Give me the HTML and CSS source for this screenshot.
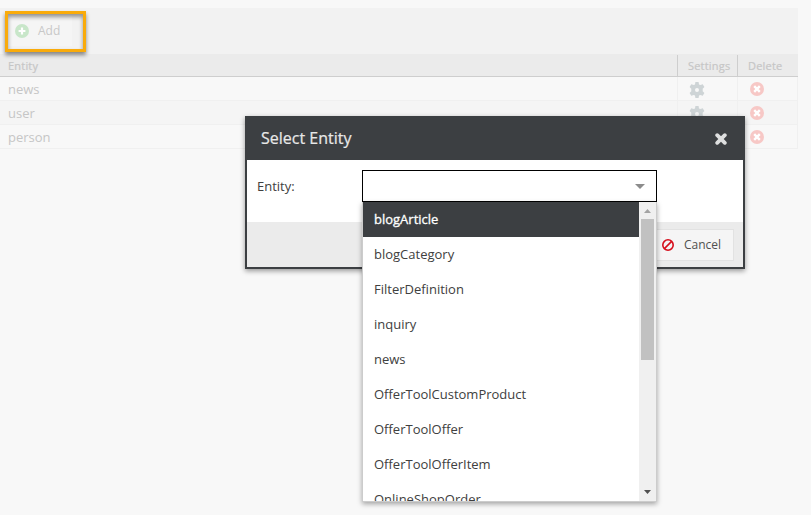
FILE: index.html
```
<!DOCTYPE html>
<html lang="en">
<head>
<meta charset="utf-8">
<title>Select Entity</title>
<link rel="stylesheet" href="styles.css">
</head>
<body>
<svg class="defs" width="0" height="0">
  <symbol id="gear" viewBox="0 0 16 16"><path fill-rule="evenodd" d="M6.4 0h3.2l.4 2.400 1.300.7 2.400-.9 1.700 2.900-1.700 1.600v2.600l1.700 1.600-1.700 2.900-2.400-.9-1.300.7-.4 2.400H6.400L6 13.600l-1.300-.7-2.400.9-1.700-2.900 1.700-1.600V6.700L.6 5.100l1.700-2.900 2.400.9L6 2.400zM8 6a2 2 0 1 0 0 4 2 2 0 0 0 0-4z"/></symbol>
  <symbol id="remove" viewBox="0 0 14 14"><circle cx="7" cy="7" r="7"/><path d="M4.200 4.200l5.600 5.600m0-5.600l-5.600 5.600" stroke="#fff" stroke-width="2.400"/></symbol>
</svg>
<main class="panel">
  <div class="toolbar">
    <button class="add"><svg width="14" height="14" viewBox="0 0 14 14"><circle cx="7" cy="7" r="7" fill="#c8e6c9"/><path d="M7 3.600v6.800M3.600 7h6.800" stroke="#fff" stroke-width="2.200"/></svg><span>Add</span></button>
    <div class="highlight"></div>
  </div>
  <div class="row head"><div>Entity</div><div>Settings</div><div>Delete</div></div>
  <div class="row"><div>news</div><div><svg class="gear"><use href="#gear"/></svg></div><div><svg class="remove"><use href="#remove"/></svg></div></div>
  <div class="row alt"><div>user</div><div><svg class="gear"><use href="#gear"/></svg></div><div><svg class="remove"><use href="#remove"/></svg></div></div>
  <div class="row"><div>person</div><div><svg class="gear"><use href="#gear"/></svg></div><div><svg class="remove"><use href="#remove"/></svg></div></div>
</main>
<section class="dialog">
  <header><h1>Select Entity</h1><svg width="12" height="12" viewBox="0 0 12 12"><path d="M2.200 2.200l7.600 7.600m0-7.600l-7.600 7.600" stroke="#dedfdf" stroke-width="3.800" stroke-linecap="round"/></svg></header>
  <div class="form">
    <label>Entity:</label>
    <div class="combo"><svg width="10" height="5" viewBox="0 0 10 5"><path d="M0 0h10L5 5z" fill="#8c8c8c"/></svg></div>
  </div>
  <footer><button class="cancel"><svg width="12" height="12" viewBox="0 0 12 12"><circle cx="6" cy="6" r="5.200"/><path d="M2.400 9.600l7.200-7.200"/></svg><span>Cancel</span></button></footer>
  <div class="menu">
    <ul>
      <li class="selected">blogArticle</li><li>blogCategory</li><li>FilterDefinition</li><li>inquiry</li><li>news</li><li>OfferToolCustomProduct</li><li>OfferToolOffer</li><li>OfferToolOfferItem</li><li>OnlineShopOrder</li>
    </ul>
    <div class="scrollbar">
      <svg width="7" height="4" viewBox="0 0 7 4"><path d="M0 4h7L3.500 0z" fill="#a3a3a3"/></svg>
      <div class="thumb"></div>
      <svg class="down" width="7" height="4" viewBox="0 0 7 4"><path d="M0 0h7L3.500 4z" fill="#505050"/></svg>
    </div>
  </div>
</section>
</body>
</html>
```
FILE: styles.css
```
* { box-sizing: border-box; }
body { margin: 0; height: 515px; overflow: hidden; background: #f8f8f8; font: 13px/20px "Open Sans", sans-serif; color: #404040; }
svg { display: block; flex: none; }
.defs { position: absolute; }
button { font: inherit; color: inherit; margin: 0; }
.panel { width: 798px; padding-top: 8px; }
.toolbar { position: relative; height: 46px; background: #f2f2f2; padding: 7px 0 0 7px; }
.add { display: flex; align-items: center; gap: 9px; width: 65px; height: 31px; padding: 0 0 0 8px; border: 0; background: #f5f5f5; color: #c8c8c8; font-size: 12px; }
.highlight { position: absolute; left: 5px; top: 3px; width: 81px; height: 41px; border: 3px solid #f9ab0b; box-shadow: 0 3px 4px rgba(0,0,0,.45), inset 0 3px 4px rgba(0,0,0,.4); }
.row { display: grid; grid-template-columns: 677px 60px 61px; height: 24px; color: #c6c6c6; border-bottom: 1px solid #f0f0f0; }
.row > div { padding-left: 8px; line-height: 24px; border-left: 1px solid #f0f0f0; }
.row > div:first-child { border-left: 0; }
.row > div:last-child { border-right: 1px solid #f0f0f0; }
.row.alt { background: #f5f5f5; }
.row.head { height: 23px; background: #ebebeb; border-bottom-color: #cecece; font-size: 11px; letter-spacing: .2px; padding-top: 1px; }
.row.head > div { line-height: 22px; border-left-color: #cecece; border-right: 0; padding-left: 10px; -webkit-text-stroke: .2px; }
.row.head > div:first-child { padding-left: 8px; }
.row > div > svg { margin-top: 5px; }
.gear { width: 16px; height: 16px; fill: #ced4d6; margin-left: 3px; }
.remove { width: 14px; height: 14px; fill: #f7c8c6; margin-left: 4px; }
.dialog { position: absolute; left: 245px; top: 116px; width: 500px; height: 153px; border: 2px solid #3c3f42; background: #fff; box-shadow: 0 2px 5px rgba(0,0,0,.4); }
.dialog header { display: flex; align-items: center; justify-content: space-between; height: 42px; padding: 0 16px 0 14px; background: #3c3f42; color: #e8e8e8; }
.dialog h1 { margin: 0 0 2px; font-size: 16px; font-weight: 400; -webkit-text-stroke: .2px; }
.form { display: flex; height: 62px; padding: 10px; }
.form label { width: 105px; padding-top: 6px; }
.combo { display: flex; align-items: center; justify-content: flex-end; width: 295px; height: 32px; border: 1px solid #000; padding-right: 11px; }
.dialog footer { display: flex; justify-content: flex-end; height: 45px; padding: 7px 9px 0 0; background: #ebebeb; }
.cancel { display: flex; align-items: center; gap: 10px; width: 83px; height: 32px; padding: 0 0 0 10px; border: 1px solid #e2e2e2; background: #f5f5f5; font-size: 12px; color: #505050; }
.cancel svg { fill: none; stroke: #d60f1c; stroke-width: 1.600; }
.menu { position: absolute; left: 115px; top: 84px; width: 295px; height: 300px; display: flex; border: solid #ccc; border-width: 0 1px 1px; background: #fff; box-shadow: 0 2px 5px rgba(0,0,0,.35); }
.menu ul { flex: 1; margin: 0; padding: 0; list-style: none; overflow: hidden; }
.menu li { height: 35px; padding-left: 11px; line-height: 35px; }
.menu .selected { background: #3c3f42; color: #fff; -webkit-text-stroke: .3px; }
.scrollbar { display: flex; flex-direction: column; align-items: center; width: 17px; background: #f0f0f0; padding: 7px 0; }
.thumb { width: 13px; height: 141px; margin-top: 6px; background: #c1c1c1; }
.down { margin-top: auto; }
```
